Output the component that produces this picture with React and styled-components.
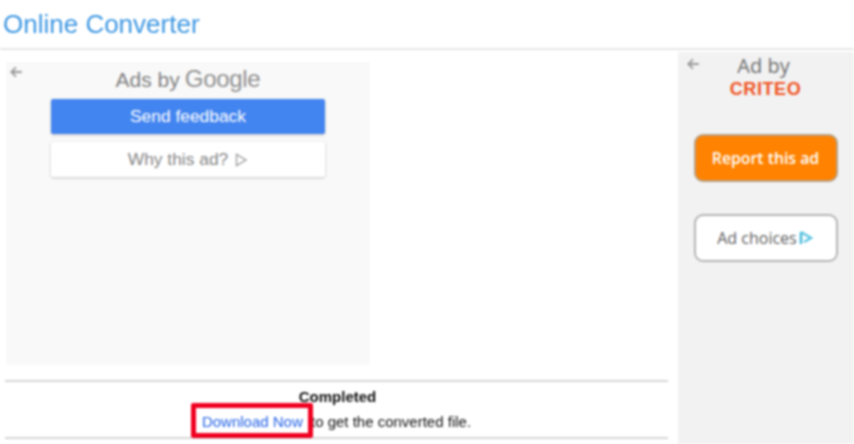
import React from "react";
import styled, { createGlobalStyle } from "styled-components";

const GlobalStyle = createGlobalStyle`
	html, body {
		margin: 0;
		padding: 0;
		background: #fff;
		overflow: hidden;
	}
`;

const Page = styled.div`
	width: 854px;
	height: 444px;
	overflow: hidden;
	display: flex;
	flex-direction: column;
	font-family: "Liberation Sans", Arial, sans-serif;
	filter: blur(0.8px);
`;

const Header = styled.header`
	height: 50px;
	flex-shrink: 0;
	box-sizing: border-box;
	padding: 10px 0 0 3px;
	border-bottom: 2px solid #e6e6e6;
	font-size: 26px;
	line-height: 29px;
	color: #3d97e2;
`;

const Body = styled.div`
	flex: 1;
	display: flex;
	min-height: 0;
	padding-top: 2px;
`;

const Main = styled.main`
	width: 663px;
	margin-left: 5px;
	flex-shrink: 0;
	display: flex;
	flex-direction: column;
	padding-top: 10px;
`;

const GooglePanel = styled.section`
	width: 364px;
	height: 303px;
	margin-left: 1px;
	box-sizing: border-box;
	background: #f9f9f9;
	display: flex;
	flex-direction: column;
	align-items: center;
	position: relative;
	padding-top: 3px;
`;

const BackArrow = styled.svg`
	position: absolute;
	left: ${(props) => props.$left}px;
	top: ${(props) => props.$top}px;
	width: 14px;
	height: 14px;
	fill: none;
	stroke: #999;
	stroke-width: 1.6;
`;

const AdsBy = styled.div`
	height: 34px;
	display: flex;
	align-items: baseline;
	gap: 5px;
	font-size: 21px;
	line-height: 28px;
	color: #808080;
`;

const GoogleWord = styled.span`
	font-family: "Liberation Sans", sans-serif;
	font-size: 24px;
	letter-spacing: -0.3px;
	color: #909090;
`;

const PanelButton = styled.div`
	width: 274px;
	height: ${(props) => props.$height}px;
	margin-bottom: ${(props) => props.$gap || 0}px;
	display: flex;
	align-items: center;
	justify-content: center;
	gap: 6px;
	border-radius: 2px;
	font-size: 17.4px;
	background: ${(props) => (props.$primary ? "#4385f0" : "#fff")};
	color: ${(props) => (props.$primary ? "#fff" : "#858585")};
	box-shadow: 0 1px 3px rgba(0, 0, 0, 0.22);
`;

const Status = styled.section`
	margin-top: 15px;
	height: 59px;
	box-sizing: border-box;
	border-top: 2px solid #d6d6d6;
	border-bottom: 2px solid #d6d6d6;
	text-align: center;
	font-size: 15px;
	color: #111;
	padding-top: 7px;
	line-height: 16px;
`;

const Completed = styled.div`
	font-weight: bold;
	margin-left: 2px;
`;

const Message = styled.div`
	margin-top: 9px;
	position: relative;
`;

const DownloadLink = styled.a`
	color: #2463e6;
	position: relative;
	padding-right: 4px;

	&::after {
		content: "";
		position: absolute;
		left: -11px;
		top: -10px;
		width: 112px;
		height: 25px;
		border: 5px solid #f00020;
		border-radius: 2px;
	}
`;

const Aside = styled.aside`
	width: 176px;
	margin-left: 10px;
	flex-shrink: 0;
	background: #f2f2f2;
	display: flex;
	flex-direction: column;
	align-items: center;
	position: relative;
`;

const AdByLabel = styled.div`
	margin-top: 2px;
	margin-left: -5px;
	font-family: "Open Sans", sans-serif;
	font-size: 20px;
	line-height: 24px;
	color: #6e6e6e;
`;

const CriteoLogo = styled.div`
	margin-left: -1px;
	margin-top: 2px;
	font-family: "Liberation Sans", sans-serif;
	font-weight: bold;
	font-size: 18px;
	line-height: 19px;
	letter-spacing: 0.6px;
	color: #f0511e;
`;

const AsideButton = styled.div`
	width: 144px;
	height: 48px;
	margin-top: ${(props) => props.$top}px;
	margin-left: -1px;
	box-sizing: border-box;
	display: flex;
	align-items: center;
	justify-content: center;
	gap: 1px;
	border-radius: 9px;
	font-family: "Open Sans", sans-serif;
	font-weight: ${(props) => (props.$accent ? 600 : 400)};
	font-size: ${(props) => (props.$accent ? 15.8 : 16)}px;
	border: 2px solid ${(props) => (props.$accent ? "#b9a184" : "#b4b4b4")};
	background: ${(props) => (props.$accent ? "#ff8200" : "#fff")};
	color: ${(props) => (props.$accent ? "#fff" : "#606060")};
`;

const ArrowIcon = ({ left, top }) => (
	<BackArrow $left={left} $top={top} viewBox="0 0 12 12">
		<path d="M11 6H2M6 2L2 6l4 4" />
	</BackArrow>
);

const App = () => {
	return (
		<Page>
			<GlobalStyle />
			<Header>Online Converter</Header>
			<Body>
				<Main>
					<GooglePanel>
						<ArrowIcon left={3} top={3} />
						<AdsBy>
							Ads by <GoogleWord>Google</GoogleWord>
						</AdsBy>
						<PanelButton $primary $height={35} $gap={8}>
							Send feedback
						</PanelButton>
						<PanelButton $height={35}>
							Why this ad?
							<svg width="14" height="14" viewBox="0 0 14 14" fill="none" stroke="#9a9a9a" strokeWidth="1.3">
								<path d="M2.5 1.5v11L12 7z" />
							</svg>
						</PanelButton>
					</GooglePanel>
					<Status>
						<Completed>Completed</Completed>
						<Message>
							<DownloadLink>Download Now</DownloadLink> to get the converted file.
						</Message>
					</Status>
				</Main>
				<Aside>
					<ArrowIcon left={8} top={5} />
					<AdByLabel>Ad by</AdByLabel>
					<CriteoLogo>CRITEO</CriteoLogo>
					<AsideButton $accent $top={35}>Report this ad</AsideButton>
					<AsideButton $top={32}>
						Ad choices
						<svg width="16" height="16" viewBox="0 0 16 16" fill="none" strokeWidth="2.4">
							<path d="M3 2v12" stroke="#3fb6d8" />
							<path d="M3 2l10 6-7 4" stroke="#5cc6e4" />
						</svg>
					</AsideButton>
				</Aside>
			</Body>
		</Page>
	);
};

export default App;
